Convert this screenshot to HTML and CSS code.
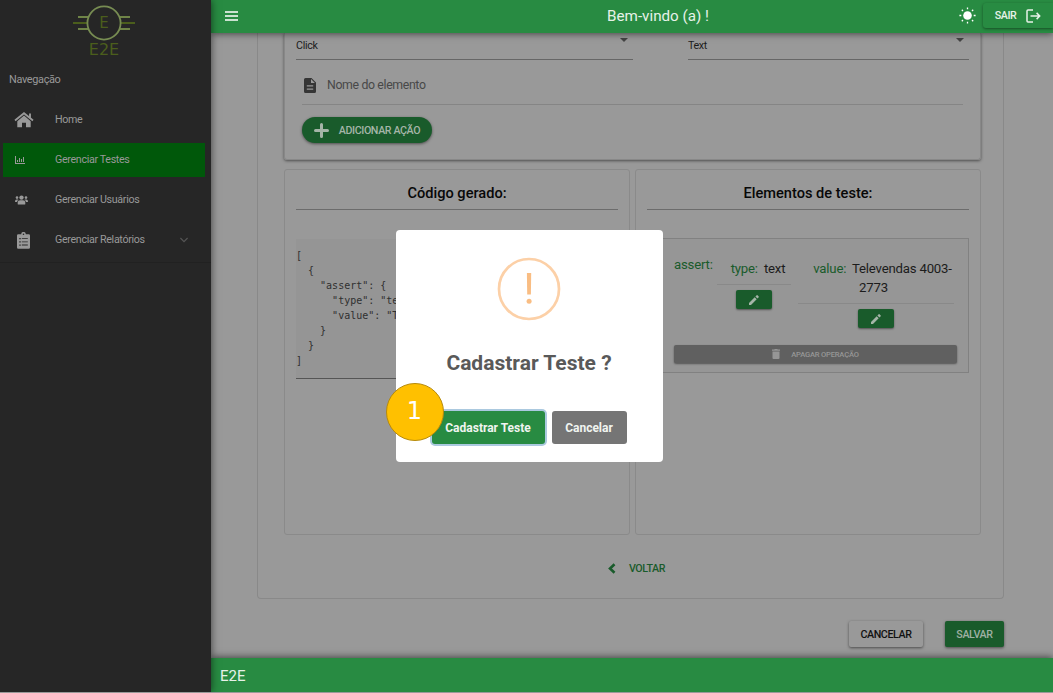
FILE: index.html
```html
<!DOCTYPE html>
<html lang="pt-BR">
<head>
<meta charset="utf-8">
<title>E2E</title>
<link rel="stylesheet" href="styles.css">
</head>
<body>
<div class="app">
  <aside class="sidebar">
    <div class="logo">
      <svg width="64" height="56" viewBox="0 0 64 56">
        <g fill="none" stroke-width="1.8">
          <path d="M6 12h10M6 24h10M48 12h10M48 24h10" stroke="#6f8447"/>
          <path d="M1 18h14M49 18h14" stroke="#4b5e1c"/>
          <circle cx="32" cy="18" r="16.600" stroke="#778c52"/>
        </g>
        <text class="logo-letter" x="32" y="23.100">E</text>
        <text class="logo-name" x="32" y="50.300">E2E</text>
      </svg>
    </div>
    <div class="nav-title">Navegação</div>
    <nav class="nav">
      <a class="nav-item">
        <span class="nav-icon"><svg class="i-home" width="20" height="16" viewBox="0 0 20 16"><path d="M3.3 9.2 10 3.6l6.700 5.600V15.200h-4.700v-4.500H8v4.500H3.300z"/><path d="M1 8.500 10 1.300l9 7.200M16 1.500v4" fill="none" stroke="currentColor" stroke-width="1.900"/></svg></span>
        <span>Home</span>
      </a>
      <a class="nav-item active">
        <span class="nav-icon small"><svg width="10" height="8" viewBox="0 0 10 8"><path d="M0 0h1v7h9v1H0zM2 4h1v2H2zM4 2h1v4H4zM6 3h1v3H6zM8 1h1v5H8z"/></svg></span>
        <span>Gerenciar Testes</span>
      </a>
      <a class="nav-item">
        <span class="nav-icon small"><svg width="13" height="10" viewBox="0 0 13 10"><circle cx="6.500" cy="2.600" r="2.200"/><circle cx="2" cy="2.600" r="1.300"/><circle cx="11" cy="2.600" r="1.300"/><path d="M2.700 9V7.500q0-2.300 2.300-2.300h3q2.300 0 2.300 2.300V9q0 .5-.8.5h-6q-.8 0-.8-.5zM0 6.500q0-2 1.600-2h1q.8 0 1 .3Q2.300 5.400 2.100 7H.5Q0 7 0 6.500zM13 6.500q0-2-1.600-2h-1q-.8 0-1 .3 1.300.6 1.500 2.200h1.600q.5 0 .5-.5z"/></svg></span>
        <span>Gerenciar Usuários</span>
      </a>
      <a class="nav-item">
        <span class="nav-icon"><svg width="13" height="17" viewBox="0 0 13 17"><path fill-rule="evenodd" d="M1.300 2.200h2.900a2.300 2.300 0 0 1 4.600 0h2.900q1.300 0 1.300 1.300v12q0 1.300-1.300 1.300H1.300Q0 16.800 0 15.500v-12q0-1.300 1.300-1.300zM5.700 2.200a.8.800 0 1 0 1.600 0 .8.800 0 0 0-1.600 0zM2.300 6v1.300h1.400V6zm2.500.2v.9h6v-.9zM2.300 9.200v1.300h1.400V9.200zm2.500.2v.9h6v-.9zM2.300 12.400v1.300h1.400v-1.300zm2.500.2v.9h6v-.9z"/></svg></span>
        <span>Gerenciar Relatórios</span>
        <svg class="chevron" width="8" height="6" viewBox="0 0 8 6"><path d="M.4 1 4 4.600 7.600 1" fill="none" stroke="#555" stroke-width="1.200"/></svg>
      </a>
    </nav>
  </aside>

  <div class="main">
    <header class="topbar">
      <svg class="burger" width="13" height="10" viewBox="0 0 13 10"><path d="M0 1h13M0 5h13M0 9h13" stroke="#fff" stroke-width="1.300"/></svg>
      <div class="greeting">Bem-vindo (a) !</div>
      <svg class="sun" width="17" height="17" viewBox="0 0 17 17"><circle cx="8.500" cy="8.500" r="4.300" fill="#fff"/><path d="M8.500.4v1.900M8.500 14.700v1.900M.4 8.500h1.900M14.700 8.500h1.900M2.800 2.800l1.200 1.200M13 13l1.200 1.200M2.800 14.200 4 13M13 4l1.200-1.200" stroke="#fff" stroke-width="1.300"/></svg>
      <button class="exit"><span>SAIR</span>
        <svg width="15" height="14" viewBox="0 0 15 14"><path d="M7 1H2Q1 1 1 2v10q0 1 1 1h5M4.500 7H13.500M10.600 3.900 13.700 7l-3.100 3.100" fill="none" stroke="#e7f2e9" stroke-width="1.500"/></svg>
      </button>
    </header>

    <div class="content">
      <section class="stepper">
        <div class="card form">
          <div class="selects">
            <div class="select action">Click<i class="caret"></i></div>
            <div class="select kind">Text<i class="caret"></i></div>
          </div>
          <div class="field">
            <svg width="12" height="15" viewBox="0 0 12 15"><path fill="#353535" fill-rule="evenodd" d="M1.500 0H7.500L12 4.500v9q0 1.500-1.500 1.500h-9Q0 15 0 13.500v-12Q0 0 1.500 0zM7 1.100V5h3.900zM2.800 7.300v1.300h6.400V7.300zm0 3.100v1.300h6.400v-1.300z"/></svg>
            <span>Nome do elemento</span>
          </div>
          <button class="add">
            <svg width="15" height="15" viewBox="0 0 15 15"><path d="M7.500 1.500v12M1.500 7.500h12" stroke="#a5b5a8" stroke-width="3" stroke-linecap="round"/></svg>
            <span>ADICIONAR AÇÃO</span>
          </button>
        </div>

        <div class="columns">
          <div class="card column">
            <h2>Código gerado:</h2>
            <pre class="code">[
  {
    "assert": {
      "type": "text",
      "value": "Televendas 4003-2773"
    }
  }
]</pre>
          </div>
          <div class="card column">
            <h2>Elementos de teste:</h2>
            <div class="operation">
              <div class="op-row">
                <div class="op-name">assert:</div>
                <div class="op-prop type">
                  <div class="prop-text"><b>type:</b> <span>text</span></div>
                  <button class="edit"><svg width="10" height="10" viewBox="0 0 10 10"><path d="M0 8v2h2l5.700-5.700-2-2zM6.400 1.600l2 2L9.700 2.300q.4-.4 0-.8L8.500.3q-.4-.4-.8 0z"/></svg></button>
                </div>
                <div class="op-prop value">
                  <div class="prop-text"><b>value:</b> <span>Televendas 4003-2773</span></div>
                  <button class="edit"><svg width="10" height="10" viewBox="0 0 10 10"><path d="M0 8v2h2l5.700-5.700-2-2zM6.400 1.600l2 2L9.700 2.300q.4-.4 0-.8L8.500.3q-.4-.4-.8 0z"/></svg></button>
                </div>
              </div>
              <button class="delete">
                <svg width="8" height="10" viewBox="0 0 8 10"><path d="M.5 2.500h7V9q0 1-1 1h-5q-1 0-1-1zM0 .6h2.200L2.800 0h2.400l.6.600H8v1.200H0z"/></svg>
                <span>APAGAR OPERAÇÃO</span>
              </button>
            </div>
          </div>
        </div>

        <button class="back">
          <svg width="8" height="11" viewBox="0 0 8 11"><path d="M6.500 1.200 2 5.500l4.500 4.300" fill="none" stroke="#195b2b" stroke-width="2.600"/></svg>
          <span>VOLTAR</span>
        </button>
      </section>
      <div class="actions">
        <button class="btn cancel">CANCELAR</button>
        <button class="btn save">SALVAR</button>
      </div>
    </div>

    <footer class="footer">E2E</footer>
  </div>
</div>

<div class="modal">
  <svg class="warn" width="64" height="64" viewBox="0 0 64 64"><circle cx="32" cy="32" r="30" fill="none" stroke="#fcd0a7" stroke-width="2.700"/><path d="M29.900 16h4.300l-.3 21.500h-3.700z" fill="#f9bd83"/><circle cx="32.100" cy="44.300" r="2.500" fill="#f9bd83"/></svg>
  <h1>Cadastrar Teste ?</h1>
  <div class="modal-actions">
    <button class="confirm">Cadastrar Teste</button>
    <button class="dismiss">Cancelar</button>
  </div>
  <div class="marker">1</div>
</div>
</body>
</html>
```
FILE: styles.css
```css
* { box-sizing: border-box; }
body { margin: 0; overflow: hidden; background: #999; font-family: Roboto, sans-serif; color: #1c1c1c; }
button { border: 0; padding: 0; font-family: inherit; display: flex; align-items: center; justify-content: center; }
h1, h2, pre { margin: 0; }
svg { flex: none; display: block; }

.app { display: flex; width: 1053px; height: 692px; }

.sidebar { width: 211px; background: #262626; color: #999; flex: none; position: relative; z-index: 2; box-shadow: 0 0 8px rgba(0,0,0,.6); }
.logo { display: flex; justify-content: center; padding: 5px 3px 0 0; height: 72px; }
.logo-letter, .logo-name { font-family: "DejaVu Sans", sans-serif; fill: #4b5e1c; text-anchor: middle; }
.logo-letter { font-size: 15px; }
.logo-name { font-size: 16px; }
.nav-title { padding-left: 9px; height: 31px; font-size: 10.900px; letter-spacing: -.33px; line-height: 16px; }
.nav { display: flex; flex-direction: column; gap: 6px; padding: 0 6px 5px 3px; border-bottom: 1px solid #212121; }
.nav-item { display: flex; align-items: center; height: 34px; font-size: 10.700px; letter-spacing: -.33px; line-height: 12px; padding-right: 17px; }
.nav-item.active { background: #00580a; }
.nav-icon { width: 52px; padding-left: 14px; fill: #999; color: #999; }
.nav-icon.small { padding-left: 12px; }
.i-home { margin-left: -3px; }
.chevron { margin-left: auto; }

.main { flex: 1; display: flex; flex-direction: column; min-width: 0; }
.topbar { height: 33px; background: #288b42; color: #e7f2e9; display: flex; align-items: center; box-shadow: 0 1px 7px rgba(0,0,0,.55); z-index: 1; padding-left: 14px; flex: none; }
.burger { margin-top: -2px; }
.greeting { flex: 1; text-align: center; font-size: 15.200px; padding-left: 119px; margin-top: -2px; white-space: nowrap; }
.sun { margin: -2px 7px 0 0; }
.exit { width: 70px; height: 25px; margin-top: -2px; background: #288b42; color: #e7f2e9; font-size: 10.700px; letter-spacing: -.4px; font-weight: 500; gap: 10px; border-radius: 3px 0 0 3px; box-shadow: 0 1px 3px rgba(0,0,0,.45); }

.content { flex: 1; padding: 0 49px 0 46px; min-height: 0; }
.stepper { height: 566px; border: 1px solid #898989; border-top: 0; border-radius: 0 0 4px 4px; padding: 0 22px 0 26px; }
.card { border: 1px solid #8a8a8a; border-radius: 3px; }
.form { height: 127px; border-top: 0; border-color: #888; border-radius: 0 0 3px 3px; box-shadow: 0 1px 3px rgba(0,0,0,.5); padding: 0 11px; }
.selects { display: flex; justify-content: space-between; }
.select { height: 27px; border-bottom: 1px solid #666; display: flex; justify-content: space-between; font-size: 10.700px; letter-spacing: -.33px; line-height: 25px; }
.action { width: 337px; }
.kind { width: 281px; }
.caret { border: 4px solid transparent; border-top-color: #444; height: 0; margin: 5px 5px 0 0; }
.field { display: flex; align-items: center; gap: 11px; height: 45px; margin: 0 6px; padding: 6px 0 0 2px; border-bottom: 1px solid #858585; font-size: 12.300px; letter-spacing: -.35px; color: #484848; }
.add { width: 130px; height: 26px; margin: 12px 6px 0; border-radius: 13px; background: #195b2b; color: #a5b5a8; font-size: 10.700px; letter-spacing: -.4px; font-weight: 500; gap: 10px; box-shadow: 0 1px 3px rgba(0,0,0,.5); white-space: nowrap; }

.columns { display: flex; gap: 5px; margin-top: 9px; height: 366px; }
.column { flex: 1; padding: 0 11px; min-width: 0; }
.column h2 { height: 40px; line-height: 46px; border-bottom: 1px solid #6c6c6c; text-align: center; font-size: 14.600px; font-weight: 500; color: #080808; }
.code { margin-top: 29px; height: 140px; padding-top: 9px; background: #959595; border-bottom: 1px solid #555; font: 10px/15px "DejaVu Sans Mono", monospace; color: #303030; }

.operation { margin-top: 28px; height: 135px; border: 1px solid #818181; background: #969696; padding: 20px 11px 0 26px; }
.op-row { display: flex; height: 86px; font-size: 13.200px; letter-spacing: -.2px; line-height: 19px; }
.op-name { width: 43px; margin-top: -4px; color: #195b2b; white-space: nowrap; }
.op-prop { display: flex; flex-direction: column; align-items: center; text-align: center; }
.type { width: 74px; }
.value { width: 156px; margin-left: 7px; }
.prop-text { width: 100%; padding-bottom: 6px; border-bottom: 1px solid #898989; }
.prop-text b { font-weight: 400; color: #195b2b; margin: 0 3px 0 13px; }
.prop-text span { margin-right: 5px; }
.edit { width: 36px; height: 19px; margin-top: 5px; background: #195b2b; fill: #a5b5a8; border-radius: 2px; box-shadow: 0 1px 2px rgba(0,0,0,.45); }
.delete { width: 283px; height: 18px; background: #606060; color: #969696; fill: #969696; font-size: 7.600px; letter-spacing: -.2px; font-weight: 500; gap: 11px; border-radius: 2px; box-shadow: 0 1px 2px rgba(0,0,0,.45); }

.back { margin: 22px auto 0; height: 22px; padding-left: 8px; gap: 13px; background: none; color: #195b2b; font-size: 10.700px; letter-spacing: -.4px; font-weight: 500; }
.actions { display: flex; justify-content: flex-end; gap: 22px; margin-top: 22px; }
.btn { height: 26px; font-size: 10.700px; letter-spacing: -.4px; font-weight: 500; border-radius: 2px; box-shadow: 0 1px 3px rgba(0,0,0,.5); }
.cancel { width: 74px; background: #999; color: #111; }
.save { width: 59px; background: #195b2b; color: #9fb0a3; }
.footer { height: 34px; background: #288b42; color: #e7f2e9; padding-left: 9px; font-size: 15px; line-height: 36px; box-shadow: 0 -1px 7px rgba(0,0,0,.55); flex: none; z-index: 1; }

.modal { position: absolute; z-index: 5; left: 396px; top: 230px; width: 267px; height: 232px; background: #fff; border-radius: 4px; padding: 27px 1px 0 0; display: flex; flex-direction: column; align-items: center; }
.modal h1 { margin-top: 28px; font-size: 21px; line-height: 28px; font-weight: 700; color: #595959; white-space: nowrap; }
.modal-actions { display: flex; gap: 7px; margin-top: 34px; }
.modal-actions button { height: 33px; border-radius: 3px; color: #f0f4f0; font-size: 12px; font-weight: 700; }
.confirm { width: 113px; background: #288b42; box-shadow: 0 0 0 2px #abc9df; }
.dismiss { width: 75px; background: #757575; }
.marker { position: absolute; left: -10px; top: 153px; width: 58px; height: 58px; border: 1px solid #b68a0c; border-radius: 50%; background: #ffc000; color: #fff; text-align: center; font: 24px/55px "DejaVu Sans", sans-serif; padding-right: 1px; }
```
